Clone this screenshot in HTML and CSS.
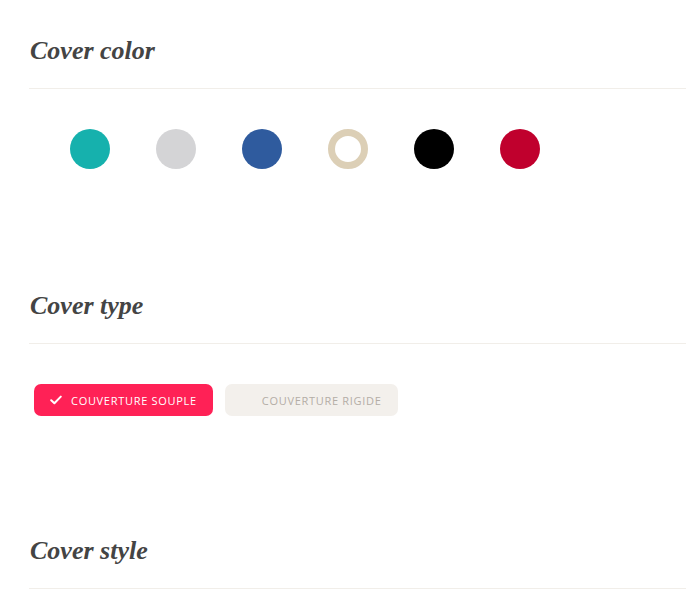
FILE: index.html
```html
<!DOCTYPE html>
<html lang="fr">
<head>
<meta charset="utf-8">
<title>Cover options</title>
<link rel="stylesheet" href="styles.css">
</head>
<body>
<main class="options">
  <section class="group group-color">
    <h2 class="group-title">Cover color</h2>
    <div class="swatches">
      <span class="swatch swatch-teal"></span>
      <span class="swatch swatch-grey"></span>
      <span class="swatch swatch-blue"></span>
      <span class="swatch swatch-beige"></span>
      <span class="swatch swatch-black"></span>
      <span class="swatch swatch-red"></span>
    </div>
  </section>
  <section class="group group-type">
    <h2 class="group-title">Cover type</h2>
    <div class="choices">
      <button class="choice choice-active">
        <svg class="check" width="12" height="10" viewBox="0 0 12 10"><path d="M1.2 5.2 L4.4 8.3 L10.8 1.6" fill="none" stroke="#fff" stroke-width="2" stroke-linecap="round" stroke-linejoin="round"/></svg>
        <span>COUVERTURE SOUPLE</span>
      </button>
      <button class="choice">
        <span class="check"></span>
        <span>COUVERTURE RIGIDE</span>
      </button>
    </div>
  </section>
  <section class="group">
    <h2 class="group-title">Cover style</h2>
  </section>
</main>
</body>
</html>
```

FILE: styles.css
```css
html, body {
  margin: 0;
  padding: 0;
  background: #ffffff;
}

.options {
  padding: 36px 0 0 29px;
}

.group {
  margin-bottom: 0;
}

.group-color {
  margin-bottom: 122px;
}

.group-type {
  margin-bottom: 120px;
}

.group-title {
  margin: 0;
  padding: 0 0 22px 1px;
  font-family: "Liberation Serif", "Times New Roman", serif;
  font-style: italic;
  font-weight: bold;
  font-size: 26px;
  line-height: 30px;
  color: #444444;
  border-bottom: 1px solid #f1eee9;
}

.swatches {
  display: flex;
  gap: 46px;
  padding: 40px 0 0 41px;
}

.swatch {
  display: block;
  width: 40px;
  height: 40px;
  border-radius: 50%;
  box-sizing: border-box;
}

.swatch-teal { background: #16b1ad; }
.swatch-grey { background: #d4d4d6; }
.swatch-blue { background: #2f5b9e; }
.swatch-beige { background: #ffffff; border: 7px solid #dccfb6; }
.swatch-black { background: #000000; }
.swatch-red { background: #c0002d; }

.choices {
  display: flex;
  gap: 12px;
  padding: 40px 0 0 5px;
}

.choice {
  display: flex;
  align-items: center;
  gap: 9px;
  height: 32px;
  padding: 0 16px 0 16px;
  border: 0;
  border-radius: 7px;
  background: #f3f0ec;
  color: #b3ada6;
  font-family: "Open Sans", "Liberation Sans", sans-serif;
  font-size: 11px;
  letter-spacing: 0.7px;
  cursor: pointer;
}

.choice-active {
  background: #ff2156;
  color: #ffffff;
}

.check {
  display: block;
  width: 12px;
  height: 10px;
  flex: none;
}
```
